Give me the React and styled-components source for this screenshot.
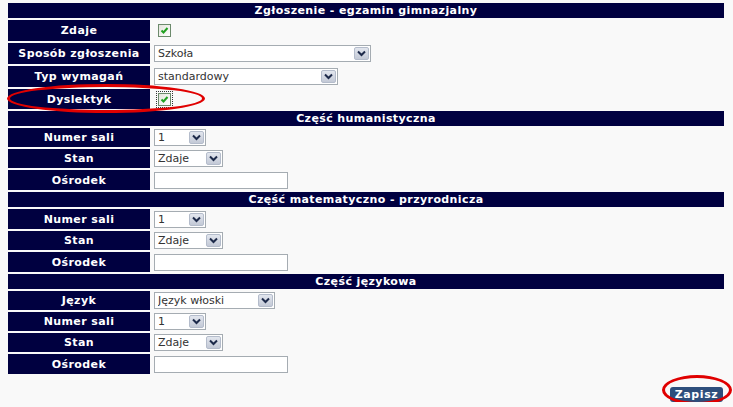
import styled, { createGlobalStyle } from 'styled-components';

const GlobalStyle = createGlobalStyle`
  body {
    margin: 0;
    background: #f9f9f9;
    font-family: 'DejaVu Sans', Verdana, sans-serif;
  }
`;

const Page = styled.div`
  padding: 3px 9px 0 8px;
`;

const Form = styled.div`
  display: flex;
  flex-direction: column;
  gap: 2px;
`;

const HeaderBar = styled.div`
  height: 15px;
  line-height: 15px;
  background: #000040;
  color: #fff;
  font-size: 11px;
  font-weight: bold;
  text-align: center;
  letter-spacing: 0.4px;
`;

const Row = styled.div`
  position: relative;
  display: grid;
  grid-template-columns: 142px 1fr;
  column-gap: 2px;
  height: ${(p) => p.$h || 19}px;
`;

const Label = styled.div`
  display: flex;
  align-items: center;
  justify-content: center;
  background: #000040;
  color: #fff;
  font-size: 11px;
  font-weight: bold;
  letter-spacing: 0.4px;
`;

const Value = styled.div`
  display: flex;
  align-items: center;
  padding-left: 2px;
`;

const SelectBox = styled.span`
  display: inline-flex;
  align-items: center;
  box-sizing: border-box;
  width: ${(p) => p.$w}px;
  height: 17px;
  border: 1px solid #a5acb2;
  background: #fff;
  padding-right: 1px;
`;

const NativeSelect = styled.select`
  appearance: none;
  flex: 1;
  min-width: 0;
  height: 100%;
  border: none;
  outline: none;
  background: transparent;
  font-family: 'DejaVu Sans', Verdana, sans-serif;
  font-size: 11px;
  color: #333;
  padding: 0 0 0 3px;
`;

const Arrow = styled.span`
  display: flex;
  align-items: center;
  justify-content: center;
  box-sizing: border-box;
  width: 15px;
  height: 13px;
  border: 1px solid #b4bccb;
  border-radius: 2px;
  background: linear-gradient(#e2e6ee, #c3c9d6);
`;

const TextInput = styled.input`
  box-sizing: border-box;
  width: 134px;
  height: 17px;
  border: 1px solid #a5acb2;
  background: #fff;
  padding: 0 3px;
  font-family: 'DejaVu Sans', Verdana, sans-serif;
  font-size: 11px;
  outline: none;
`;

const Check = styled.span`
  display: inline-flex;
  box-sizing: border-box;
  width: 13px;
  height: 13px;
  margin-left: 4px;
  border: 1px solid #6c8a6c;
  background: linear-gradient(135deg, #e4e4dc, #fff);
  outline: ${(p) => (p.$focus ? '1px dotted #333' : 'none')};
  outline-offset: 1px;
`;

const Ellipse = styled.span`
  position: absolute;
  left: ${(p) => p.$l}px;
  top: ${(p) => p.$t}px;
  width: ${(p) => p.$w}px;
  height: ${(p) => p.$h}px;
  box-sizing: border-box;
  border: 3px solid #e00000;
  border-radius: 50%;
  pointer-events: none;
`;

const Footer = styled.div`
  display: flex;
  justify-content: flex-end;
  margin-top: 9px;
  padding-right: 1px;
`;

const ButtonWrap = styled.div`
  position: relative;
`;

const SaveBtn = styled.button`
  height: 15px;
  width: 53px;
  padding: 0;
  border: none;
  border-radius: 3px;
  background: #2d4e7c;
  color: #fff;
  font-family: 'DejaVu Sans', Verdana, sans-serif;
  font-size: 11px;
  font-weight: bold;
  letter-spacing: 0.6px;
  line-height: 15px;
`;

function Select({ width, value }) {
  return (
    <SelectBox $w={width}>
      <NativeSelect defaultValue={value}>
        <option>{value}</option>
      </NativeSelect>
      <Arrow>
        <svg width="9" height="7" viewBox="0 0 9 7">
          <path d="M1 1.5 L4.5 5 L8 1.5" fill="none" stroke="#1d2a4a" strokeWidth="2" />
        </svg>
      </Arrow>
    </SelectBox>
  );
}

function Checkbox({ focus }) {
  return (
    <Check $focus={focus}>
      <svg width="11" height="11" viewBox="0 0 11 11">
        <path d="M2.5 5.5 L4.5 7.5 L8.5 3" fill="none" stroke="#21a121" strokeWidth="2" />
      </svg>
    </Check>
  );
}

function Section({ title, rows }) {
  return (
    <>
      <HeaderBar>{title}</HeaderBar>
      {rows.map((r) => (
        <Row key={r.label} $h={r.h}>
          <Label>{r.label}</Label>
          <Value>{r.field}</Value>
        </Row>
      ))}
    </>
  );
}

export default function App() {
  return (
    <Page>
      <GlobalStyle />
      <Form>
        <HeaderBar>Zgłoszenie - egzamin gimnazjalny</HeaderBar>
        <Row $h={21}>
          <Label>Zdaje</Label>
          <Value>
            <Checkbox />
          </Value>
        </Row>
        <Row $h={21}>
          <Label>Sposób zgłoszenia</Label>
          <Value>
            <Select width={217} value="Szkoła" />
          </Value>
        </Row>
        <Row $h={21}>
          <Label>Typ wymagań</Label>
          <Value>
            <Select width={184} value="standardowy" />
          </Value>
        </Row>
        <Row $h={20}>
          <Label>Dyslektyk</Label>
          <Value>
            <Checkbox focus />
          </Value>
          <Ellipse $l={-1} $t={-5} $w={198} $h={29} />
        </Row>
        <Section
          title="Część humanistyczna"
          rows={[
            { label: 'Numer sali', h: 19, field: <Select width={52} value="1" /> },
            { label: 'Stan', h: 19, field: <Select width={69} value="Zdaje" /> },
            { label: 'Ośrodek', h: 20, field: <TextInput /> },
          ]}
        />
        <Section
          title="Część matematyczno - przyrodnicza"
          rows={[
            { label: 'Numer sali', h: 20, field: <Select width={52} value="1" /> },
            { label: 'Stan', h: 19, field: <Select width={69} value="Zdaje" /> },
            { label: 'Ośrodek', h: 20, field: <TextInput /> },
          ]}
        />
        <Section
          title="Część językowa"
          rows={[
            { label: 'Język', h: 19, field: <Select width={121} value="Język włoski" /> },
            { label: 'Numer sali', h: 19, field: <Select width={52} value="1" /> },
            { label: 'Stan', h: 19, field: <Select width={69} value="Zdaje" /> },
            { label: 'Ośrodek', h: 20, field: <TextInput /> },
          ]}
        />
      </Form>
      <Footer>
        <ButtonWrap>
          <SaveBtn>Zapisz</SaveBtn>
          <Ellipse $l={-8} $t={-8} $w={70} $h={30} />
        </ButtonWrap>
      </Footer>
    </Page>
  );
}
